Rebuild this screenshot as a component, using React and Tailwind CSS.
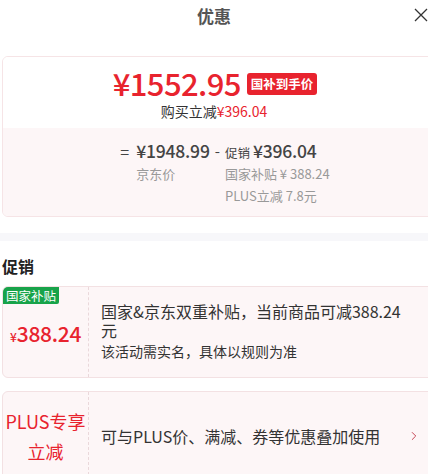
import { ChevronRight } from 'lucide-react'

const font = { fontFamily: '"Noto Sans CJK SC", "Noto Sans", sans-serif' }

export default function App() {
  return (
    <div className="w-[428px] h-[474px] overflow-hidden bg-white relative" style={font}>
      {/* Header */}
      <div className="h-[31px] flex items-center justify-center relative">
        <span className="text-[17px] font-bold text-[#555]">优惠</span>
        <svg className="absolute right-[0px] top-[8px]" width="14" height="14" viewBox="0 0 14 14">
          <path d="M1 1 L13 13 M13 1 L1 13" stroke="#333" strokeWidth="1.3" fill="none" />
        </svg>
      </div>

      {/* Price summary card */}
      <div className="mt-[25px] ml-[2px] w-[432px] rounded-[6px] border border-[#f6e4e6] overflow-hidden">
        <div className="bg-white h-[71px] flex flex-col items-center pt-[9px]">
          <div className="flex items-center gap-[6px] pl-[2px] pr-[8px] h-[34px]">
            <span className="text-[31px] leading-[34px] font-medium text-[#e8232e] tracking-[-0.6px]">¥1552.95</span>
            <span className="bg-[#e8232e] text-white text-[12.5px] font-bold leading-[22px] px-[4px] rounded-[3px] mt-[2px]">国补到手价</span>
          </div>
          <div className="text-[14px] leading-[18px] text-[#333] pr-[8px] mt-[2px]">
            购买立减<span className="text-[#e8232e]">¥396.04</span>
          </div>
        </div>
        <div className="bg-[#fdf6f7] h-[88px] flex justify-center pt-[10px] pl-[14px] text-[#444]">
          <span className="text-[16px] leading-[26px] mr-[7px]">=</span>
          <div className="flex flex-col">
            <span className="text-[17.5px] leading-[26px] font-medium tracking-[-0.2px]">¥1948.99</span>
            <span className="text-[13px] leading-[22px] text-[#999] mt-[-1px]">京东价</span>
          </div>
          <span className="text-[15px] leading-[26px] mx-[5px]">-</span>
          <div className="flex flex-col">
            <div className="flex items-baseline">
              <span className="text-[12.5px] mr-[3px]">促销</span>
              <span className="text-[17.5px] leading-[26px] font-medium tracking-[-0.2px]">¥396.04</span>
            </div>
            <span className="text-[13px] leading-[22px] text-[#999] mt-[-1px]">国家补贴 ¥ 388.24</span>
            <span className="text-[13px] leading-[22px] text-[#999]">PLUS立减 7.8元</span>
          </div>
        </div>
      </div>

      {/* Gray divider */}
      <div className="mt-[16px] h-[8px] bg-[#f7f7fa]" />

      {/* Promotions */}
      <div className="px-[2px] pt-[14px] text-[16px] leading-[22px] font-bold text-[#222]">促销</div>

      <div className="mt-[9px] ml-[2px] w-[432px] h-[92px] rounded-[6px] border border-[#f3e1e3] bg-[#fdf6f7] flex overflow-hidden relative">
        <span className="absolute left-0 top-0 bg-[#18a34a] text-white text-[12.5px] leading-[17px] px-[3px] rounded-br-[2px]">国家补贴</span>
        <div className="w-[86px] shrink-0 flex items-center justify-center pt-[4px] border-r border-dashed border-[#ead8db]">
          <span className="text-[#e8232e] font-medium">
            <span className="text-[12px]">¥</span>
            <span className="text-[21px] tracking-[-0.3px]">388.24</span>
          </span>
        </div>
        <div className="flex-1 pl-[12px] pt-[15px] text-[#333]">
          <div className="text-[16px] leading-[19px] w-[306px]">国家&amp;京东双重补贴，当前商品可减388.24元</div>
          <div className="text-[14px] leading-[20px] mt-[1px]">该活动需实名，具体以规则为准</div>
        </div>
      </div>

      <div className="mt-[13px] ml-[2px] w-[432px] h-[100px] rounded-[6px] border border-[#f3e1e3] bg-[#fdf6f7] flex overflow-hidden">
        <div className="w-[86px] shrink-0 flex flex-col items-center justify-center pb-[10px] border-r border-dashed border-[#ead8db] text-[#e8232e] text-[18px] leading-[30px]">
          <span>PLUS专享</span>
          <span>立减</span>
        </div>
        <div className="flex-1 flex items-center justify-between pl-[12px] pr-[12px] pb-[10px] text-[#333]">
          <span className="text-[16px]">可与PLUS价、满减、券等优惠叠加使用</span>
          <ChevronRight className="text-[#c23a4a]" size={14} strokeWidth={1.6} />
        </div>
      </div>
    </div>
  )
}
